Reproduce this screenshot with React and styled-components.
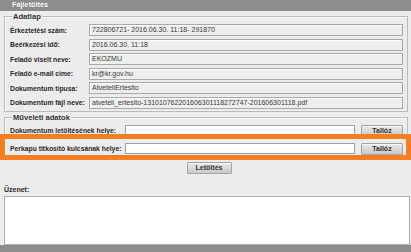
import React from "react";
import styled, { createGlobalStyle } from "styled-components";

const GlobalStyle = createGlobalStyle`
  html, body {
    margin: 0;
    padding: 0;
    background: #ececec;
  }
  * {
    box-sizing: border-box;
  }
`;

const font = `"Liberation Sans", Arial, sans-serif`;

const Page = styled.div`
  position: relative;
  width: 411px;
  height: 252px;
  overflow: hidden;
  display: flex;
  flex-direction: column;
  background: #ececec;
  font-family: ${font};
  color: #222;
`;

const TitleBar = styled.div`
  height: 11px;
  flex: none;
  background: #8d8d8d;
  color: #fff;
  font-size: 7.3px;
  font-weight: 700;
  line-height: 10px;
  padding-left: 12px;
  text-shadow: 0 0 1px #666;
`;

const Main = styled.div`
  flex: 1;
  display: flex;
  flex-direction: column;
  padding: 0 1px 0 4px;
`;

const Fieldset = styled.fieldset`
  margin: ${({ $top }) => $top}px 2px 0 0;
  padding: ${({ $pad }) => $pad};
  border: 1px solid #bcbcbc;
  box-shadow: inset 1px 1px 0 #fafafa;
  min-width: 0;
`;

const Legend = styled.legend`
  padding: 0 1px;
  margin-left: 2px;
  font-size: 7.6px;
  font-weight: 700;
  line-height: 9px;
  color: #333;
`;

const InfoGrid = styled.div`
  display: grid;
  grid-template-columns: 79px 1fr;
  row-gap: 2.5px;
  align-items: center;
`;

const Label = styled.div`
  font-size: 6.8px;
  font-weight: 700;
  color: #2a2a2a;
  white-space: nowrap;
`;

const Field = styled.div`
  height: ${({ $h }) => $h || 12}px;
  border: 1px solid ${({ $readOnly }) => ($readOnly ? "#a9a9a9" : "#a0a0a0")};
  background: ${({ $readOnly }) => ($readOnly ? "#eeeeee" : "#ffffff")};
  box-shadow: ${({ $readOnly }) => ($readOnly ? "inset 1px 1px 0 #fbfbfb" : "none")};
  font-size: 7px;
  line-height: 10px;
  padding-left: 2px;
  color: #3a3a3a;
  white-space: nowrap;
  overflow: hidden;
`;

const ActionGrid = styled.div`
  display: grid;
  grid-template-columns: 109px 1fr 42px;
  column-gap: 6px;
  row-gap: 6px;
  align-items: center;
`;

const Button = styled.button`
  height: ${({ $h }) => $h || 12}px;
  width: ${({ $w }) => $w}px;
  padding: 0;
  border: 1px solid #a4a4a4;
  border-radius: 1px;
  background: linear-gradient(#e9e9e9, #c9c9c9);
  box-shadow: inset 0 1px 0 #f8f8f8;
  font-family: ${font};
  font-size: 7px;
  font-weight: 700;
  color: #333;
  line-height: 10px;
`;

const ButtonRow = styled.div`
  display: flex;
  justify-content: center;
  padding: 2px 0 0 4px;
`;

const MessageLabel = styled.div`
  margin-top: 11px;
  font-size: 7px;
  font-weight: 700;
  color: #2a2a2a;
  line-height: 9px;
`;

const MessageBox = styled.div`
  margin-top: 2px;
  height: 49px;
  border: 1px solid #b0b0b0;
  background: #fff;
`;

const BottomBar = styled.div`
  height: 7px;
  flex: none;
  margin-top: auto;
  background: #8d8d8d;
`;

const Highlight = styled.div`
  position: absolute;
  left: 0;
  top: 134px;
  width: 411px;
  height: 26px;
  border: 5px solid #f57f22;
  pointer-events: none;
`;

const info = [
  ["Érkeztetési szám:", "722806721- 2016.06.30. 11:18- 291870"],
  ["Beérkezési idő:", "2016.06.30. 11:18"],
  ["Feladó viselt neve:", "EKOZMU"],
  ["Feladó e-mail címe:", "kr@kr.gov.hu"],
  ["Dokumentum típusa:", "AtveteliErtesito"],
  ["Dokumentum fájl neve:", "atveteli_ertesito-131010762201606301118272747-201606301118.pdf"],
];

const actions = ["Dokumentum letöltésének helye:", "Perkapu titkosító kulcsának helye:"];

export default function App() {
  return (
    <Page>
      <GlobalStyle />
      <TitleBar>Fájletöltés</TitleBar>
      <Main>
        <Fieldset $top={1} $pad="3px 4px 2px 5px">
          <Legend>Adatlap</Legend>
          <InfoGrid>
            {info.map(([label, value]) => (
              <React.Fragment key={label}>
                <Label>{label}</Label>
                <Field $readOnly>{value}</Field>
              </React.Fragment>
            ))}
          </InfoGrid>
        </Fieldset>
        <Fieldset $top={1} $pad="3px 4px 4px 5px">
          <Legend>Műveleti adatok</Legend>
          <ActionGrid>
            {actions.map((label) => (
              <React.Fragment key={label}>
                <Label>{label}</Label>
                <Field $h={11} />
                <Button $w={42} $h={12}>Tallóz</Button>
              </React.Fragment>
            ))}
          </ActionGrid>
        </Fieldset>
        <ButtonRow>
          <Button $w={45} $h={12}>Letöltés</Button>
        </ButtonRow>
        <MessageLabel>Üzenet:</MessageLabel>
        <MessageBox />
      </Main>
      <BottomBar />
      <Highlight />
    </Page>
  );
}
